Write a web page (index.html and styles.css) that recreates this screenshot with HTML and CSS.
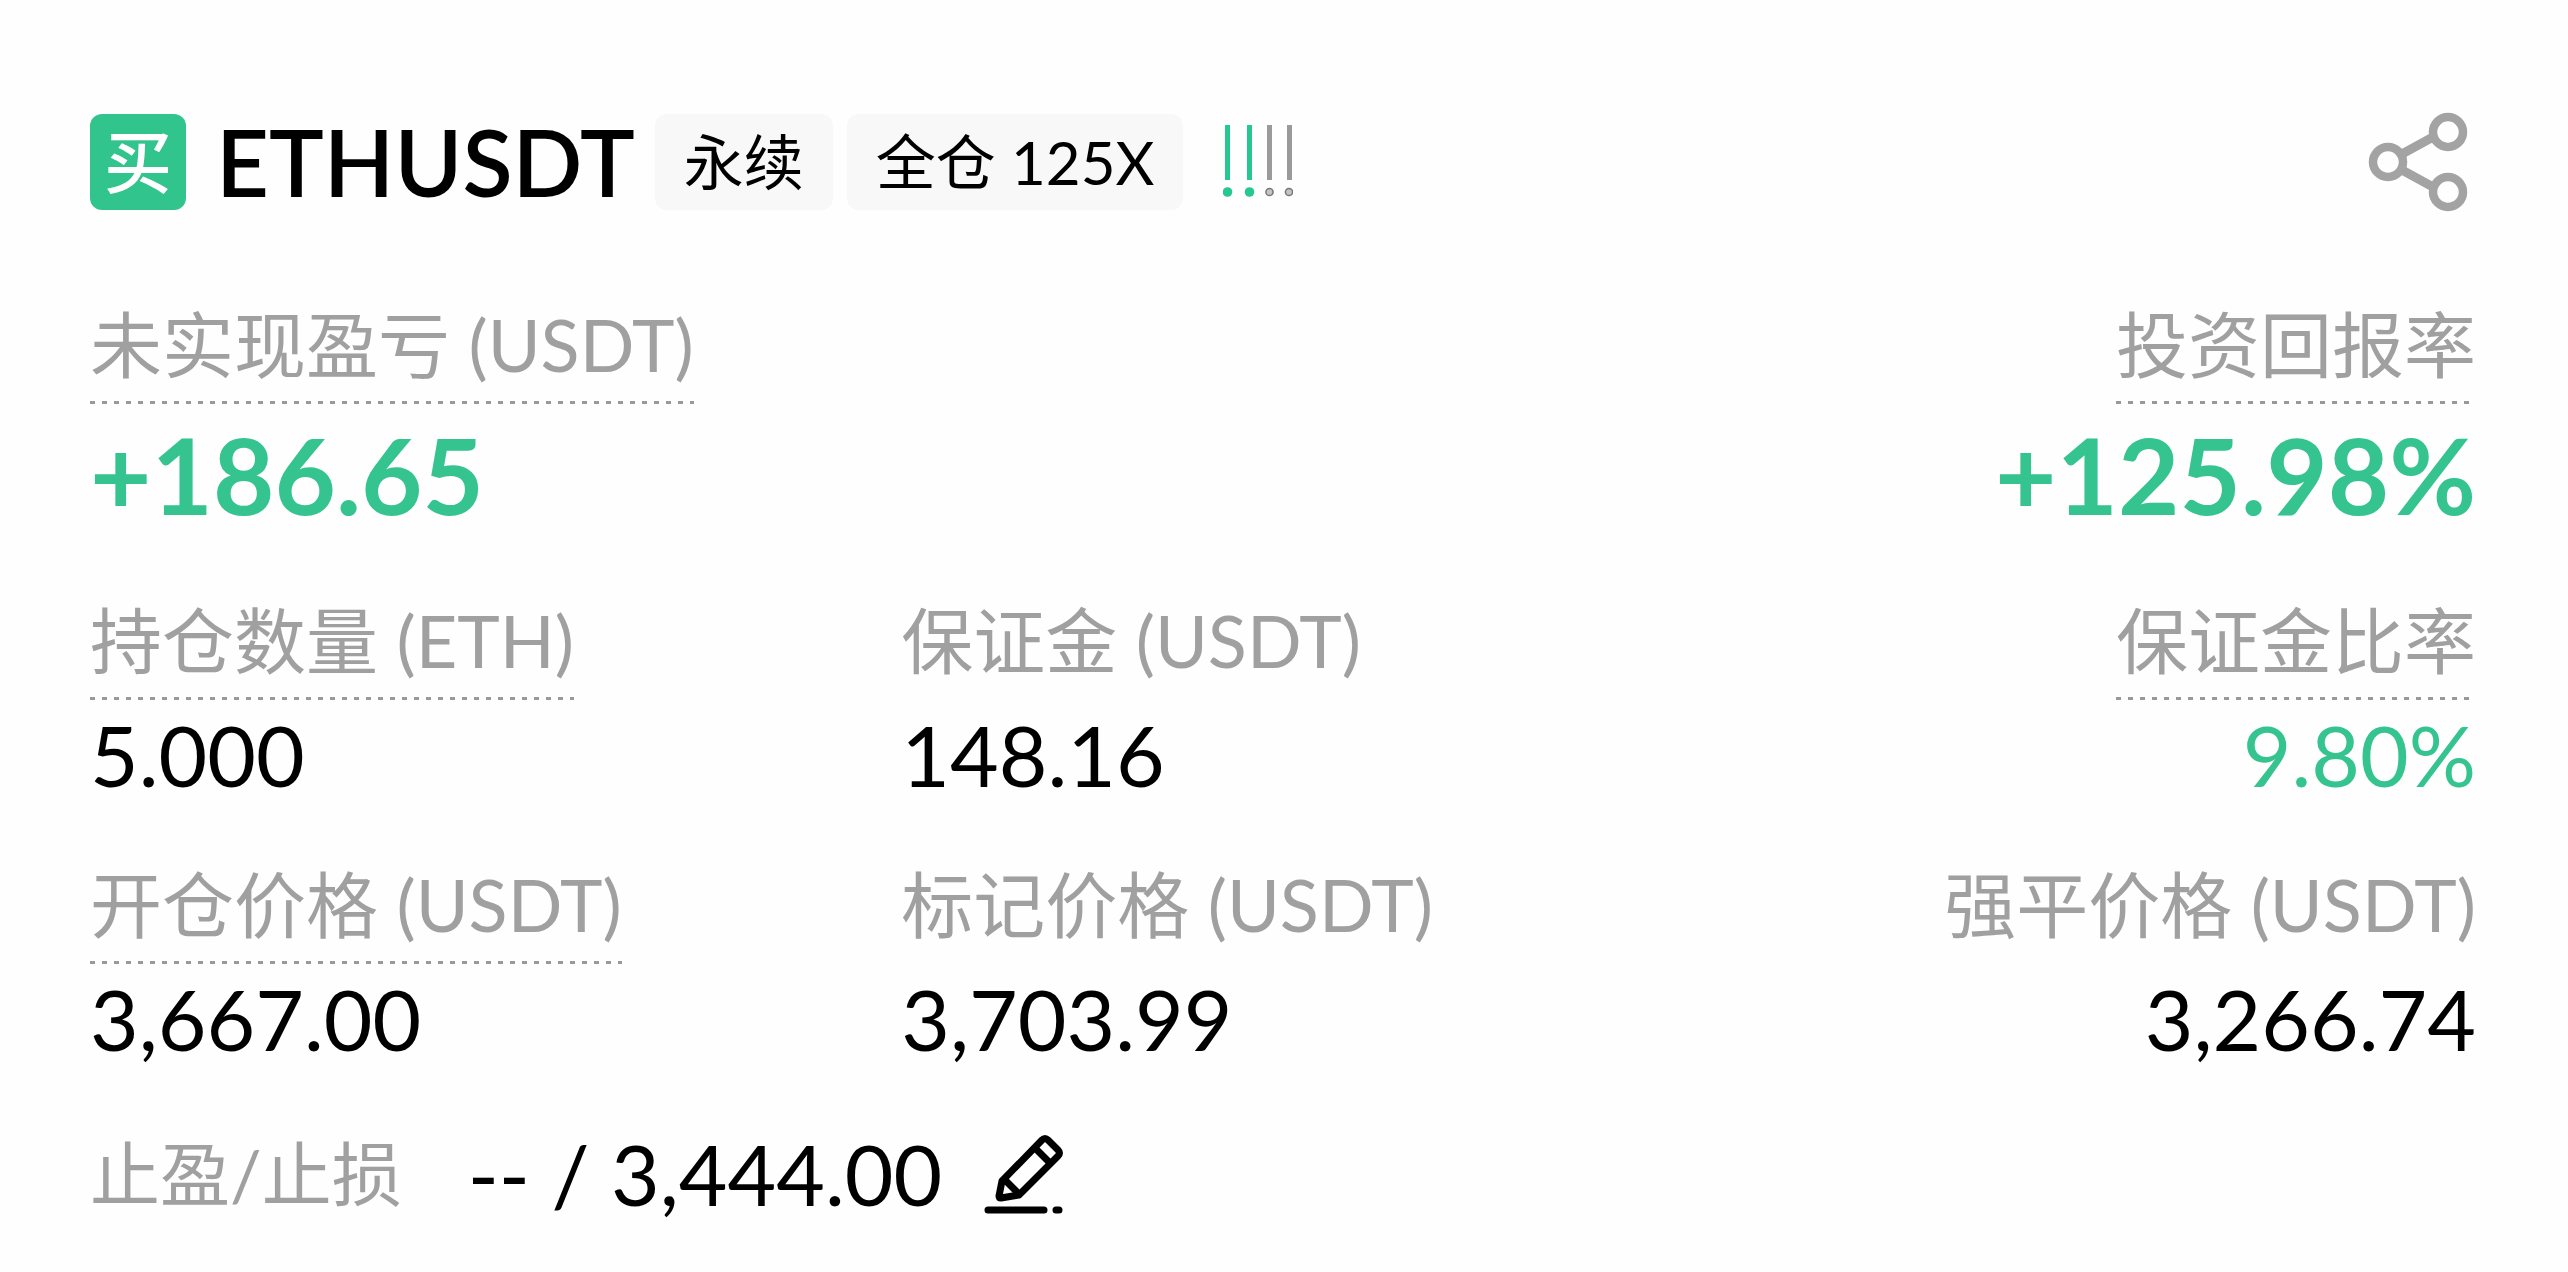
FILE: index.html
```html
<!DOCTYPE html>
<html lang="zh-CN">
<head>
  <meta charset="UTF-8">
  <meta name="viewport" content="width=device-width, initial-scale=1.0">
  <title>ETHUSDT 永续</title>
  <link rel="stylesheet" href="styles.css">
</head>
<body>
  <main class="position">
    <header class="header">
      <span class="side">买</span>
      <h1 class="symbol">ETHUSDT</h1>
      <span class="tag">永续</span>
      <span class="tag">全仓 125X</span>
      <svg class="risk" viewBox="0 0 70 74" aria-hidden="true">
        <g fill="#26c88f">
          <rect x="2" y="0" width="5" height="55"/>
          <circle cx="4.5" cy="67" r="4.8"/>
          <rect x="24" y="0" width="5" height="55"/>
          <circle cx="26.5" cy="67" r="4.8"/>
        </g>
        <g fill="#9a9a9a">
          <rect x="44" y="0" width="5" height="55"/>
          <rect x="64" y="0" width="5" height="55"/>
        </g>
        <g fill="#c4c4c4" stroke="#777" stroke-width="1.5">
          <circle cx="46.5" cy="67" r="3.6"/>
          <circle cx="66" cy="67" r="3.6"/>
        </g>
      </svg>
      <button class="icon-btn share" type="button" aria-label="分享">
        <svg width="100" height="100" viewBox="0 0 100 100" fill="none" stroke="#a3a3a3" stroke-width="8.5">
          <path d="M34 42 65 25M34 58 65 75" stroke-width="9"/>
          <circle cx="20" cy="50" r="15"/>
          <circle cx="80" cy="20" r="15"/>
          <circle cx="80" cy="80" r="15"/>
        </svg>
      </button>
    </header>

    <dl class="row summary">
      <div class="item">
        <dt class="label dotted">未实现盈亏 (USDT)</dt>
        <dd class="value big green">+186.65</dd>
      </div>
      <div class="item right">
        <dt class="label dotted">投资回报率</dt>
        <dd class="value big green">+125.98%</dd>
      </div>
    </dl>

    <dl class="row">
      <div class="item">
        <dt class="label dotted">持仓数量 (ETH)</dt>
        <dd class="value">5.000</dd>
      </div>
      <div class="item">
        <dt class="label">保证金 (USDT)</dt>
        <dd class="value">148.16</dd>
      </div>
      <div class="item right">
        <dt class="label dotted">保证金比率</dt>
        <dd class="value green">9.80%</dd>
      </div>
    </dl>

    <dl class="row">
      <div class="item">
        <dt class="label dotted">开仓价格 (USDT)</dt>
        <dd class="value">3,667.00</dd>
      </div>
      <div class="item">
        <dt class="label">标记价格 (USDT)</dt>
        <dd class="value">3,703.99</dd>
      </div>
      <div class="item right">
        <dt class="label">强平价格 (USDT)</dt>
        <dd class="value">3,266.74</dd>
      </div>
    </dl>

    <footer class="stops">
      <span class="stops-label">止盈/止损</span>
      <span class="stops-value">-- / 3,444.00</span>
      <button class="icon-btn" type="button" aria-label="编辑止盈止损">
        <svg width="80" height="82" viewBox="0 0 80 82" fill="none" stroke="#000" stroke-width="7" stroke-linejoin="round" stroke-linecap="round">
          <path d="M18 48 58 7Q61 4 64 7L74 17Q77 20 74 23L35 62 17 65Q15 65 15 63Z"/>
          <path d="M52 16 66 30M21 47 35 61"/>
          <path d="M4 77H60M72 77H75"/>
        </svg>
      </button>
    </footer>
  </main>
</body>
</html>
```
FILE: styles.css
```css
* {
  box-sizing: border-box;
}

body {
  margin: 0;
  background: #fefefe;
  color: #000;
  font-family: Lato, "Noto Sans CJK SC", sans-serif;
}

.position {
  padding: 112px 92px 40px 90px;
}

.header {
  display: flex;
  align-items: center;
  margin-bottom: 90px;
}

.side {
  width: 96px;
  height: 96px;
  border-radius: 12px;
  background: #31c48d;
  color: #fff;
  font-size: 68px;
  font-weight: 500;
  line-height: 96px;
  text-align: center;
}

.symbol {
  margin: 0 20px 0 30px;
  font-size: 92px;
  font-weight: 600;
  line-height: 100px;
}

.tag {
  margin-right: 14px;
  padding: 0 29px;
  border-radius: 12px;
  background: #f8f8f8;
  font-size: 60px;
  line-height: 96px;
  white-space: nowrap;
}

.risk {
  width: 70px;
  height: 74px;
  margin-left: 26px;
}

.icon-btn {
  display: block;
  padding: 0;
  border: none;
  background: none;
  cursor: pointer;
}

.icon-btn svg {
  display: block;
}

.share {
  margin: 0 8px 0 auto;
}

.row {
  display: grid;
  grid-template-columns: 34% 1fr auto;
  margin: 0 0 62px;
}

.summary {
  grid-template-columns: 1fr auto;
  margin-bottom: 68px;
}

.item {
  display: flex;
  flex-direction: column;
  align-items: flex-start;
}

.right {
  align-items: flex-end;
}

.label {
  padding-bottom: 18px;
  color: #a0a0a0;
  font-size: 72px;
  line-height: 84px;
  white-space: nowrap;
}

.dotted {
  background: repeating-linear-gradient(90deg, #999 0 5px, transparent 5px 12px) left bottom / 100% 3px no-repeat;
}

.value {
  margin: 12px 0 0;
  font-size: 84px;
  line-height: 86px;
  white-space: nowrap;
}

.row + .row {
  margin-bottom: 64px;
}

.big {
  margin-top: 14px;
  font-size: 106px;
  font-weight: 700;
  line-height: 112px;
}

.green {
  color: #35c48f;
}

.stops {
  display: flex;
  align-items: center;
  padding-top: 4px;
  line-height: 88px;
  white-space: nowrap;
}

.stops-label {
  margin-right: 66px;
  color: #a0a0a0;
  font-size: 70px;
}

.stops-value {
  margin-right: 42px;
  font-size: 84px;
}
```
